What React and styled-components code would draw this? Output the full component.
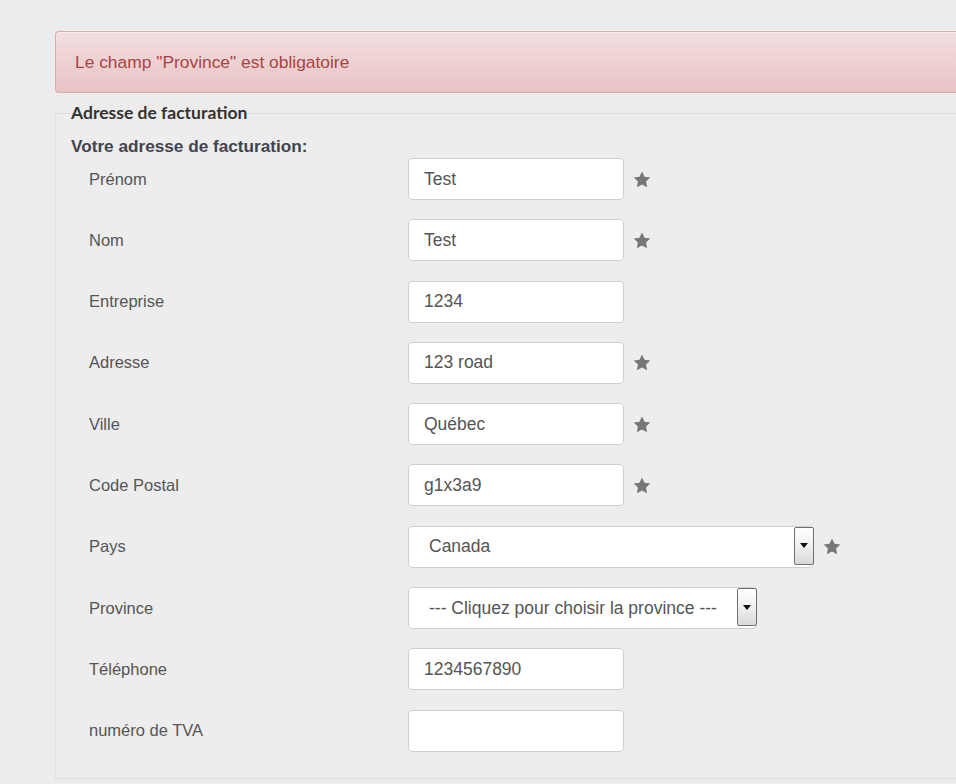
import React from "react";
import styled, { createGlobalStyle } from "styled-components";

const GlobalStyle = createGlobalStyle`
  html, body {
    margin: 0;
    padding: 0;
    background: #ececec;
    overflow: hidden;
  }
  body {
    font-family: "Liberation Sans", Arial, sans-serif;
  }
`;

const Page = styled.div`
  padding: 31px 0 0 55px;
  width: 960px;
`;

const Alert = styled.div`
  border: 1px solid #dcaaaa;
  border-right: none;
  border-radius: 4px 0 0 4px;
  background: linear-gradient(to bottom, #f3dfe0 0%, #e8c3c5 100%);
  color: #a94442;
  font-size: 17.4px;
  line-height: 22px;
  padding: 19px;
  box-shadow: 0 1px 0 rgba(255, 255, 255, 0.4) inset;
`;

const Fieldset = styled.fieldset`
  margin: 10px 0 0 0;
  border: 1px solid #e0e0e0;
  border-right: none;
  background: #ededed;
  padding: 0 15px 26px 15px;
  min-width: 0;
`;

const Legend = styled.legend`
  padding: 0;
  font-family: Lato, "Liberation Sans", sans-serif;
  font-weight: 700;
  font-size: 17.5px;
  line-height: 20px;
  color: #333;
`;

const Heading = styled.div`
  margin-top: 13px;
  font-weight: 700;
  font-size: 17.2px;
  line-height: 20px;
  color: #41444f;
`;

const Rows = styled.div`
  margin-top: 2px;
  display: flex;
  flex-direction: column;
  gap: 19.3px;
`;

const Row = styled.div`
  display: grid;
  grid-template-columns: 337px auto;
  align-items: center;
  height: 42px;
`;

const Label = styled.label`
  padding-left: 18px;
  font-size: 16.5px;
  color: #555;
`;

const Control = styled.div`
  display: flex;
  align-items: center;
  gap: 9px;
`;

const Input = styled.input`
  box-sizing: border-box;
  width: 216px;
  height: 42px;
  border: 1px solid #cfcfcf;
  border-radius: 4px;
  background: #fff;
  padding: 0 15px;
  font-family: "Liberation Sans", Arial, sans-serif;
  font-size: 17.5px;
  color: #555;
  outline: none;
`;

const Select = styled.div`
  box-sizing: border-box;
  position: relative;
  width: ${(p) => p.$width}px;
  height: 42px;
  border: 1px solid #cfcfcf;
  border-radius: 4px;
  background: #fff;
  padding: 0 24px 0 20px;
  display: flex;
  align-items: center;
  font-size: 17.5px;
  color: #555;
  white-space: nowrap;
`;

const SelectButton = styled.span`
  position: absolute;
  right: -1px;
  top: 0;
  bottom: 2px;
  width: 20px;
  box-sizing: border-box;
  border: 1px solid #6f6f6f;
  border-radius: 2px;
  background: linear-gradient(to bottom, #ffffff 0%, #f0f0f0 50%, #d9d9d9 100%);
  display: flex;
  align-items: center;
  justify-content: center;

  &::after {
    content: "";
    border-left: 4px solid transparent;
    border-right: 4px solid transparent;
    border-top: 5px solid #111;
  }
`;

const Star = () => (
  <svg width="18" height="17" viewBox="0 0 24 23" aria-hidden="true">
    <path
      fill="#777"
      d="M12 0.8l3.4 7.1 7.8 1-5.7 5.4 1.4 7.7L12 18.3 5.1 22l1.4-7.7L0.8 8.9l7.8-1z"
    />
  </svg>
);

const fields = [
  { label: "Prénom", value: "Test", required: true },
  { label: "Nom", value: "Test", required: true },
  { label: "Entreprise", value: "1234" },
  { label: "Adresse", value: "123 road", required: true },
  { label: "Ville", value: "Québec", required: true },
  { label: "Code Postal", value: "g1x3a9", required: true },
  { label: "Pays", select: "Canada", width: 406, required: true },
  { label: "Province", select: "--- Cliquez pour choisir la province ---", width: 349 },
  { label: "Téléphone", value: "1234567890" },
  { label: "numéro de TVA", value: "" },
];

export default function App() {
  return (
    <>
      <GlobalStyle />
      <Page>
        <Alert>Le champ "Province" est obligatoire</Alert>
        <Fieldset>
          <Legend>Adresse de facturation</Legend>
          <Heading>Votre adresse de facturation:</Heading>
          <Rows>
            {fields.map((f) => (
              <Row key={f.label}>
                <Label>{f.label}</Label>
                <Control>
                  {f.select ? (
                    <Select $width={f.width}>
                      {f.select}
                      <SelectButton />
                    </Select>
                  ) : (
                    <Input defaultValue={f.value} />
                  )}
                  {f.required && <Star />}
                </Control>
              </Row>
            ))}
          </Rows>
        </Fieldset>
      </Page>
    </>
  );
}
